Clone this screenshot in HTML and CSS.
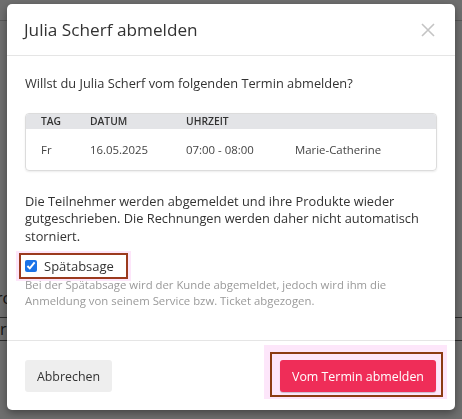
FILE: index.html
```html
<!DOCTYPE html>
<html>
<head>
    <meta charset="UTF-8">
    <meta name="viewport" content="width=device-width, initial-scale=1.0">
    <link rel="stylesheet" href="styles.css">
</head>
<body>
    <div class="page">
        <div class="page-bar"></div>
        <div class="page-text page-t">t</div>
        <div class="page-text page-rc">rc</div>
        <div class="page-row"><span>ir</span></div>
    </div>

    <div class="overlay"></div>

    <div class="modal">
        <div class="modal-header">
            <h2>Julia Scherf abmelden</h2>
            <svg class="close" width="14" height="14" viewBox="0 0 14 14">
                <path d="M1 1 L13 13 M13 1 L1 13" stroke="#c4c4c4" stroke-width="1.6" fill="none"/>
            </svg>
        </div>

        <div class="modal-body">
            <p class="frage">Willst du Julia Scherf vom folgenden Termin abmelden?</p>

            <table class="termin">
                <thead>
                    <tr>
                        <th class="c-tag">TAG</th>
                        <th class="c-datum">DATUM</th>
                        <th class="c-zeit">UHRZEIT</th>
                        <th></th>
                    </tr>
                </thead>
                <tbody>
                    <tr>
                        <td>Fr</td>
                        <td>16.05.2025</td>
                        <td>07:00 - 08:00</td>
                        <td>Marie-Catherine</td>
                    </tr>
                </tbody>
            </table>

            <p class="info">Die Teilnehmer werden abgemeldet und ihre Produkte wieder gutgeschrieben. Die Rechnungen werden daher nicht automatisch storniert.</p>

            <div class="highlight hl-check">
                <label class="check">
                    <input type="checkbox" checked>
                    <span>Spätabsage</span>
                </label>
            </div>
            <p class="hilfe">Bei der Spätabsage wird der Kunde abgemeldet, jedoch wird ihm die Anmeldung von seinem Service bzw. Ticket abgezogen.</p>
        </div>

        <div class="modal-footer">
            <button class="btn btn-grau">Abbrechen</button>
            <div class="highlight hl-btn">
                <div class="frame">
                    <button class="btn btn-rot">Vom Termin abmelden</button>
                </div>
            </div>
        </div>
    </div>
</body>
</html>
```

FILE: styles.css
```css
body {
    margin: 0;
    font-family: "Open Sans", "Noto Sans", sans-serif;
    color: #333;
    background-color: #fff;
    overflow: hidden;
}
.page {
    height: 419px;
    padding-top: 20px;
    box-sizing: border-box;
}
.page-bar {
    border-top: 1px solid #ccc;
    height: 40px;
}
.page-text {
    font-size: 16px;
    margin-left: -6px;
}
.page-rc {
    margin-top: 204px;
    margin-left: -4px;
}
.page-row {
    margin-top: 8px;
    border-top: 1px solid #666;
    border-bottom: 1px solid #666;
    height: 22px;
    font-size: 16px;
    line-height: 22px;
    margin-left: -4px;
}
.overlay {
    position: fixed;
    top: 0;
    left: 0;
    right: 0;
    bottom: 0;
    background-color: rgba(0, 0, 0, 0.57);
}
.modal {
    position: fixed;
    top: 4px;
    left: 7px;
    width: 448px;
    background-color: #fff;
    border-radius: 5px;
    box-shadow: 0 3px 8px rgba(0, 0, 0, 0.4);
}
.modal-header {
    display: flex;
    align-items: center;
    justify-content: space-between;
    height: 51px;
    padding: 0 20px 0 17px;
    border-bottom: 1px solid #e5e5e5;
}
.modal-header h2 {
    margin: 0;
    font-size: 17.2px;
    font-weight: 400;
    color: #333;
}
.close {
    display: block;
    margin-top: 1px;
}
.modal-body {
    padding: 19px 18px 31px;
    font-size: 12.8px;
}
.frage {
    margin: 0 0 20px;
    line-height: 17.5px;
}
.termin {
    width: 100%;
    border-collapse: separate;
    border-spacing: 0;
    border: 1px solid #dcdcdc;
    border-radius: 4px;
    box-shadow: 0 1px 2px rgba(0, 0, 0, 0.08);
    font-size: 11.4px;
}
.termin th {
    background-color: #e3e4e7;
    font-size: 10.3px;
    font-weight: 600;
    text-align: left;
    padding: 0 0 0 15px;
    height: 15px;
    line-height: 15px;
}
.termin th.c-tag {
    width: 34px;
}
.termin th.c-datum {
    width: 81px;
}
.termin th.c-zeit {
    width: 94px;
}
.termin td {
    padding: 0 0 0 15px;
    height: 41px;
    color: #444;
}
.termin thead tr th:first-child {
    border-top-left-radius: 3px;
}
.termin thead tr th:last-child {
    border-top-right-radius: 3px;
}
.info {
    margin: 22px 0 0;
    line-height: 17.5px;
}
.highlight {
    background-color: #fde6fa;
}
.hl-check {
    display: inline-block;
    padding: 2px 3px;
    margin: 6px 0 0 -9px;
}
.check {
    display: flex;
    align-items: center;
    gap: 7px;
    border: 2px solid #9b3a1e;
    padding: 0 12px 0 4px;
    height: 22px;
    background-color: #fff;
    font-size: 13px;
}
.check input {
    margin: 0;
    width: 12px;
    height: 12px;
    accent-color: #1a73e8;
}
.hilfe {
    margin: -4px 0 0;
    font-size: 11.35px;
    line-height: 16px;
    color: #9a9a9a;
}
.modal-footer {
    display: flex;
    justify-content: space-between;
    align-items: flex-start;
    border-top: 1px solid #e5e5e5;
    padding: 4px 8px 11px 18px;
}
.btn {
    font-family: "Open Sans", "Noto Sans", sans-serif;
    font-size: 12.4px;
    border: none;
    border-radius: 3px;
    height: 32px;
    padding: 0;
    cursor: pointer;
}
.btn-grau {
    background-color: #eeeeee;
    color: #333;
    margin-top: 15px;
    width: 87px;
}
.btn-rot {
    display: block;
    background-color: #ef2d58;
    color: #fff;
    width: 156px;
    box-shadow: 0 1px 1px rgba(0, 0, 0, 0.2);
}
.hl-btn {
    padding: 7px 4px 2px 6px;
}
.frame {
    border: 2px solid #8b3b12;
    padding: 6px 5px 3px 8px;
}
```
